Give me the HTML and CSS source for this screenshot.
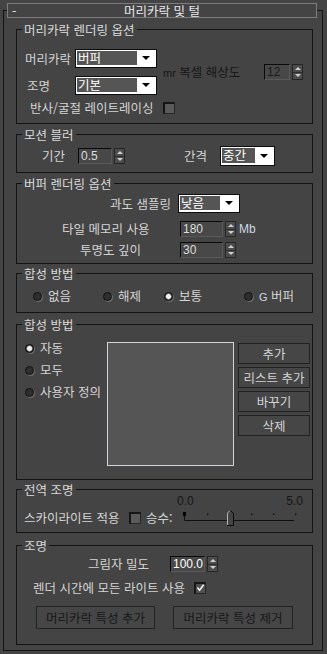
FILE: index.html
```html
<!DOCTYPE html>
<html lang="ko">
<head>
<meta charset="utf-8">
<title>머리카락 및 털</title>
<link rel="stylesheet" href="styles.css">
</head>
<body>
<div class="rollout">
  <div class="rollout-head"><span class="minus">-</span><span class="head-title">머리카락 및 털</span><span></span></div>

  <div class="group g1">
    <span class="group-title">머리카락 렌더링 옵션</span>
    <div class="g1-top">
      <div class="g1-left">
        <div class="field-row"><span class="lbl w50">머리카락</span><div class="dropdown dd1"><span class="dd-val">버퍼</span><span class="dd-arrow"></span></div></div>
        <div class="field-row"><span class="lbl w50 pl2">조명</span><div class="dropdown dd1"><span class="dd-val">기본</span><span class="dd-arrow"></span></div></div>
      </div>
      <div class="g1-mid disabled"><span class="mr">mr</span> 복셀 해상도</div>
      <div class="spinner sp1"><span class="spin-field disabled">12</span><span class="spin-btn"><i class="up"></i><i class="sep"></i><i class="down"></i></span></div>
    </div>
    <div class="check-row"><span class="check-lbl">반사/굴절 레이트레이싱</span><span class="check"></span></div>
  </div>

  <div class="group g2">
    <span class="group-title">모션 블러</span>
    <div class="g2-row">
      <span class="lbl w36">기간</span>
      <div class="spinner sp2"><span class="spin-field">0.5</span><span class="spin-btn"><i class="up"></i><i class="sep"></i><i class="down"></i></span></div>
      <span class="lbl w36 gap-l">간격</span>
      <div class="dropdown dd2"><span class="dd-val">중간</span><span class="dd-arrow"></span></div>
    </div>
  </div>

  <div class="group g3">
    <span class="group-title">버퍼 렌더링 옵션</span>
    <div class="g3-row r1"><span class="g3-lbl p93">과도 샘플링</span><div class="dropdown dd3"><span class="dd-val">낮음</span><span class="dd-arrow"></span></div></div>
    <div class="g3-row r2"><span class="g3-lbl p45">타일 메모리 사용</span><div class="spinner sp3"><span class="spin-field">180</span><span class="spin-btn"><i class="up"></i><i class="sep"></i><i class="down"></i></span></div><span class="unit">Mb</span></div>
    <div class="g3-row r3"><span class="g3-lbl p63">투명도 깊이</span><div class="spinner sp3"><span class="spin-field">30</span><span class="spin-btn"><i class="up"></i><i class="sep"></i><i class="down"></i></span></div></div>
  </div>

  <div class="group g4">
    <span class="group-title">합성 방법</span>
    <div class="radio-row">
      <span class="radio-item w70"><span class="radio"></span>없음</span>
      <span class="radio-item w61"><span class="radio"></span>해제</span>
      <span class="radio-item w80"><span class="radio on"></span>보통</span>
      <span class="radio-item"><span class="radio"></span><span><span class="latin">G</span> 버퍼</span></span>
    </div>
  </div>

  <div class="group g5">
    <span class="group-title">합성 방법</span>
    <div class="g5-body">
      <div class="radio-col">
        <span class="radio-item"><span class="radio on"></span>자동</span>
        <span class="radio-item"><span class="radio"></span>모두</span>
        <span class="radio-item"><span class="radio"></span>사용자 정의</span>
      </div>
      <div class="listbox"></div>
      <div class="btn-col">
        <span class="btn">추가</span>
        <span class="btn">리스트 추가</span>
        <span class="btn">바꾸기</span>
        <span class="btn">삭제</span>
      </div>
    </div>
  </div>

  <div class="group g6">
    <span class="group-title">전역 조명</span>
    <div class="scale-row disabled"><span>0.0</span><span>5.0</span></div>
    <div class="sky-row">
      <span class="sky-lbl">스카이라이트 적용</span>
      <span class="check"></span>
      <span class="mult">승수:</span>
      <svg class="slider" width="118" height="18" viewBox="0 0 118 18">
        <rect x="1" y="3" width="3" height="4" fill="#000"/>
        <path d="M2.5 7 V11.5 H112" stroke="#111" stroke-width="1" fill="none"/>
        <rect x="25" y="4.5" width="1.5" height="1.5" fill="#111"/>
        <rect x="69" y="4.5" width="1.5" height="1.5" fill="#111"/>
        <rect x="91" y="4.5" width="1.5" height="1.5" fill="#111"/>
        <rect x="113" y="4.5" width="1.5" height="1.5" fill="#111"/>
        <path d="M45 16 V4 L48 1 L51 4 V16 Z" fill="#444"/>
        <path d="M45.5 16 V4.2 L48 1.5" stroke="#b5b5b5" stroke-width="1" fill="none"/>
        <path d="M48 1.5 L51.5 4.2 V16.5 H45" stroke="#0a0a0a" stroke-width="1" fill="none"/>
      </svg>
    </div>
  </div>

  <div class="group g7">
    <span class="group-title">조명</span>
    <div class="g7-row1"><span class="g7-lbl">그림자 밀도</span><div class="spinner sp4"><span class="spin-field hi">100.0</span><span class="spin-btn"><i class="up"></i><i class="sep"></i><i class="down"></i></span></div></div>
    <div class="g7-row2"><span class="g7-lbl2">렌더 시간에 모든 라이트 사용</span><span class="check on"><svg width="10" height="10" viewBox="0 0 10 10"><path d="M1.5 4.5 L4 7.5 L8.5 1.5" stroke="#f0f0f0" stroke-width="1.8" fill="none"/></svg></span></div>
    <div class="g7-row3"><span class="btn dark b1">머리카락 특성 추가</span><span class="btn dark b2">머리카락 특성 제거</span></div>
  </div>
</div>
</body>
</html>
```
FILE: styles.css
```css
body {
  margin: 0;
  background: #444444;
  font-family: "Noto Sans CJK KR", "Noto Sans", sans-serif;
  font-size: 12.5px;
  line-height: 14px;
  color: #d4d4d4;
}

.rollout {
  box-sizing: border-box;
  width: 320px;
  height: 641px;
  margin: 10px 0 0 3px;
  border: 1px solid #141414;
}

.rollout-head {
  box-sizing: border-box;
  width: 310px;
  height: 15px;
  margin: -8px 0 0 3px;
  border: 1px solid #7c7c7c;
  background: #444444;
  display: grid;
  grid-template-columns: 1fr auto 1fr;
  align-items: center;
  color: #e8e8e8;
  line-height: 13px;
}
.minus { padding-left: 4px; }

.group {
  position: relative;
  box-sizing: border-box;
  width: 297px;
  margin-left: 12px;
  border: 1px solid #141414;
}
.group-title {
  position: absolute;
  top: -8px;
  left: 5px;
  padding: 0 2px;
  background: #444444;
  line-height: 15px;
  color: #dadada;
}

.g1 { margin-top: 11px; height: 95px; }
.g2 { margin-top: 10px; height: 39px; }
.g3 { margin-top: 10px; height: 81px; }
.g4 { margin-top: 9px; height: 40px; }
.g5 { margin-top: 11px; height: 156px; }
.g6 { margin-top: 9px; height: 44px; }
.g7 { margin-top: 12px; height: 100px; }

.disabled { color: #161616; }

.lbl { display: inline-block; white-space: nowrap; flex-shrink: 0; }
.w50 { width: 50px; }
.w36 { width: 36px; }
.pl2 { box-sizing: border-box; padding-left: 2px; }

/* dropdown */
.dropdown {
  box-sizing: border-box;
  display: flex;
  flex-shrink: 0;
  height: 19px;
  border: 1px solid #0c0c0c;
  background: #ffffff;
  padding: 1px 1px 2px 1px;
}
.dd-val {
  flex: 1;
  background: #555555;
  color: #ffffff;
  line-height: 14px;
  padding-left: 1px;
}
.dd-arrow {
  width: 18px;
  display: flex;
  align-items: center;
  justify-content: center;
}
.dd-arrow::after {
  content: "";
  border-left: 4px solid transparent;
  border-right: 4px solid transparent;
  border-top: 4px solid #000;
}
.dd1 { width: 82px; }
.dd2 { width: 55px; height: 20px; }
.dd3 { width: 62px; }

/* spinner */
.spinner { display: flex; gap: 2px; height: 16px; flex-shrink: 0; }
.spin-field {
  box-sizing: border-box;
  height: 16px;
  border-top: 1px solid #0a0a0a;
  border-left: 1px solid #0a0a0a;
  border-right: 1px solid #5a5a5a;
  border-bottom: 1px solid #5a5a5a;
  background: #484848;
  color: #dcdcdc;
  font-family: "Liberation Sans", sans-serif;
  font-size: 12px;
  line-height: 14px;
  padding-left: 2px;
}
.spin-field.disabled { color: #1a1a1a; }
.spin-field.hi { color: #ffffff; }
.spin-btn {
  box-sizing: border-box;
  width: 11px;
  height: 16px;
  border: 1px solid #262626;
  background: #4c4c4c;
  display: flex;
  flex-direction: column;
  align-items: center;
  justify-content: space-evenly;
}
.spin-btn .up {
  border-left: 3px solid transparent;
  border-right: 3px solid transparent;
  border-bottom: 3px solid #cfcfcf;
}
.spin-btn .down {
  border-left: 3px solid transparent;
  border-right: 3px solid transparent;
  border-top: 3px solid #cfcfcf;
}
.spin-btn .sep { width: 9px; height: 1px; background: #2c2c2c; }
.sp1 .spin-field { width: 26px; }
.sp2 .spin-field { width: 34px; }
.sp3 { margin-left: 2px; }
.sp3 .spin-field { width: 43px; }
.sp4 .spin-field { width: 35px; }

/* checkbox */
.check {
  box-sizing: border-box;
  flex-shrink: 0;
  width: 12px;
  height: 12px;
  border-top: 2px solid #161616;
  border-left: 2px solid #161616;
  border-right: 1px solid #262626;
  border-bottom: 1px solid #262626;
  background: #5a5a5a;
  display: flex;
  align-items: center;
  justify-content: center;
}
.check.on { background: #505050; }

/* radio */
.radio {
  box-sizing: border-box;
  flex-shrink: 0;
  width: 9px;
  height: 9px;
  border-radius: 50%;
  border: 1px solid #101010;
  background: #2e2e2e;
  box-shadow: 1px 1px 0 #6c6c6c;
}
.radio.on {
  background: radial-gradient(circle, #f0f0f0 0 2px, #9a9a9a 2.6px, #2e2e2e 3.6px);
}
.radio-item { display: flex; align-items: center; gap: 6px; height: 14px; white-space: nowrap; }
.latin { font-family: "Liberation Sans", sans-serif; font-size: 11px; color: #cfd8e4; }

/* group 1 */
.g1-top {
  display: flex;
  align-items: center;
  margin-top: 19px;
  height: 46px;
}
.g1-left {
  display: flex;
  flex-direction: column;
  gap: 8px;
  padding-left: 8px;
}
.field-row { display: flex; align-items: center; height: 19px; }
.g1-mid { flex: 1; margin-left: 6px; white-space: nowrap; }
.mr { font-family: "Liberation Sans", sans-serif; font-size: 11px; }
.sp1 { margin-right: 9px; }
.check-row {
  display: flex;
  align-items: center;
  height: 14px;
  margin-top: 6px;
  padding-left: 13px;
}
.check-lbl { width: 133px; white-space: nowrap; }

/* group 2 */
.g2-row {
  display: flex;
  align-items: center;
  height: 20px;
  margin-top: 11px;
  padding-left: 25px;
}
.gap-l { margin-left: 59px; }

/* group 3 */
.g3-row { display: flex; align-items: center; }
.g3-lbl { box-sizing: border-box; width: 161px; flex-shrink: 0; white-space: nowrap; }
.p93 { padding-left: 93px; }
.p45 { padding-left: 45px; }
.p63 { padding-left: 63px; }
.r1 { margin-top: 10px; height: 19px; }
.r2 { margin-top: 8px; height: 16px; }
.r3 { margin-top: 5px; height: 16px; }
.unit { margin-left: 3px; font-family: "Liberation Sans", sans-serif; font-size: 12px; color: #cfd8e4; }

/* group 4 */
.radio-row {
  display: flex;
  margin-top: 15px;
  padding-left: 16px;
}
.w70 { width: 70px; }
.w61 { width: 61px; }
.w80 { width: 80px; }

/* group 5 */
.g5-body { display: flex; margin-top: 16px; }
.radio-col {
  box-sizing: border-box;
  width: 90px;
  flex-shrink: 0;
  padding-left: 8px;
  display: flex;
  flex-direction: column;
  gap: 8px;
}
.listbox {
  box-sizing: border-box;
  flex-shrink: 0;
  width: 127px;
  height: 124px;
  margin-top: 1px;
  border: 1px solid #d2d6da;
  background: #555555;
}
.btn-col {
  display: flex;
  flex-direction: column;
  gap: 3px;
  margin-left: 4px;
  margin-top: 2px;
  width: 72px;
}
.btn {
  box-sizing: border-box;
  height: 21px;
  border: 1px solid #222222;
  background: #464646;
  display: flex;
  align-items: center;
  justify-content: center;
  color: #d4d4d4;
  white-space: nowrap;
}
.btn.dark { color: #181818; height: 23px; }

/* group 6 */
.scale-row {
  display: flex;
  justify-content: space-between;
  box-sizing: border-box;
  width: 126px;
  margin: 5px 0 0 160px;
  height: 12px;
  line-height: 12px;
  font-family: "Liberation Sans", sans-serif;
  font-size: 12px;
}
.sky-row {
  display: flex;
  align-items: center;
  height: 18px;
  margin-top: 2px;
  padding-left: 7px;
}
.sky-lbl { width: 105px; flex-shrink: 0; white-space: nowrap; }
.mult { width: 36px; margin-left: 5px; flex-shrink: 0; }
.slider { display: block; flex-shrink: 0; }

/* group 7 */
.g7-row1 { display: flex; align-items: center; height: 16px; margin-top: 10px; }
.g7-lbl { box-sizing: border-box; width: 153px; flex-shrink: 0; padding-left: 71px; }
.g7-row2 { display: flex; align-items: center; height: 13px; margin-top: 9px; padding-left: 16px; }
.g7-lbl2 { width: 161px; flex-shrink: 0; white-space: nowrap; }
.g7-row3 { display: flex; gap: 18px; margin-top: 12px; padding-left: 19px; }
.b1 { width: 119px; }
.b2 { width: 120px; }
```
